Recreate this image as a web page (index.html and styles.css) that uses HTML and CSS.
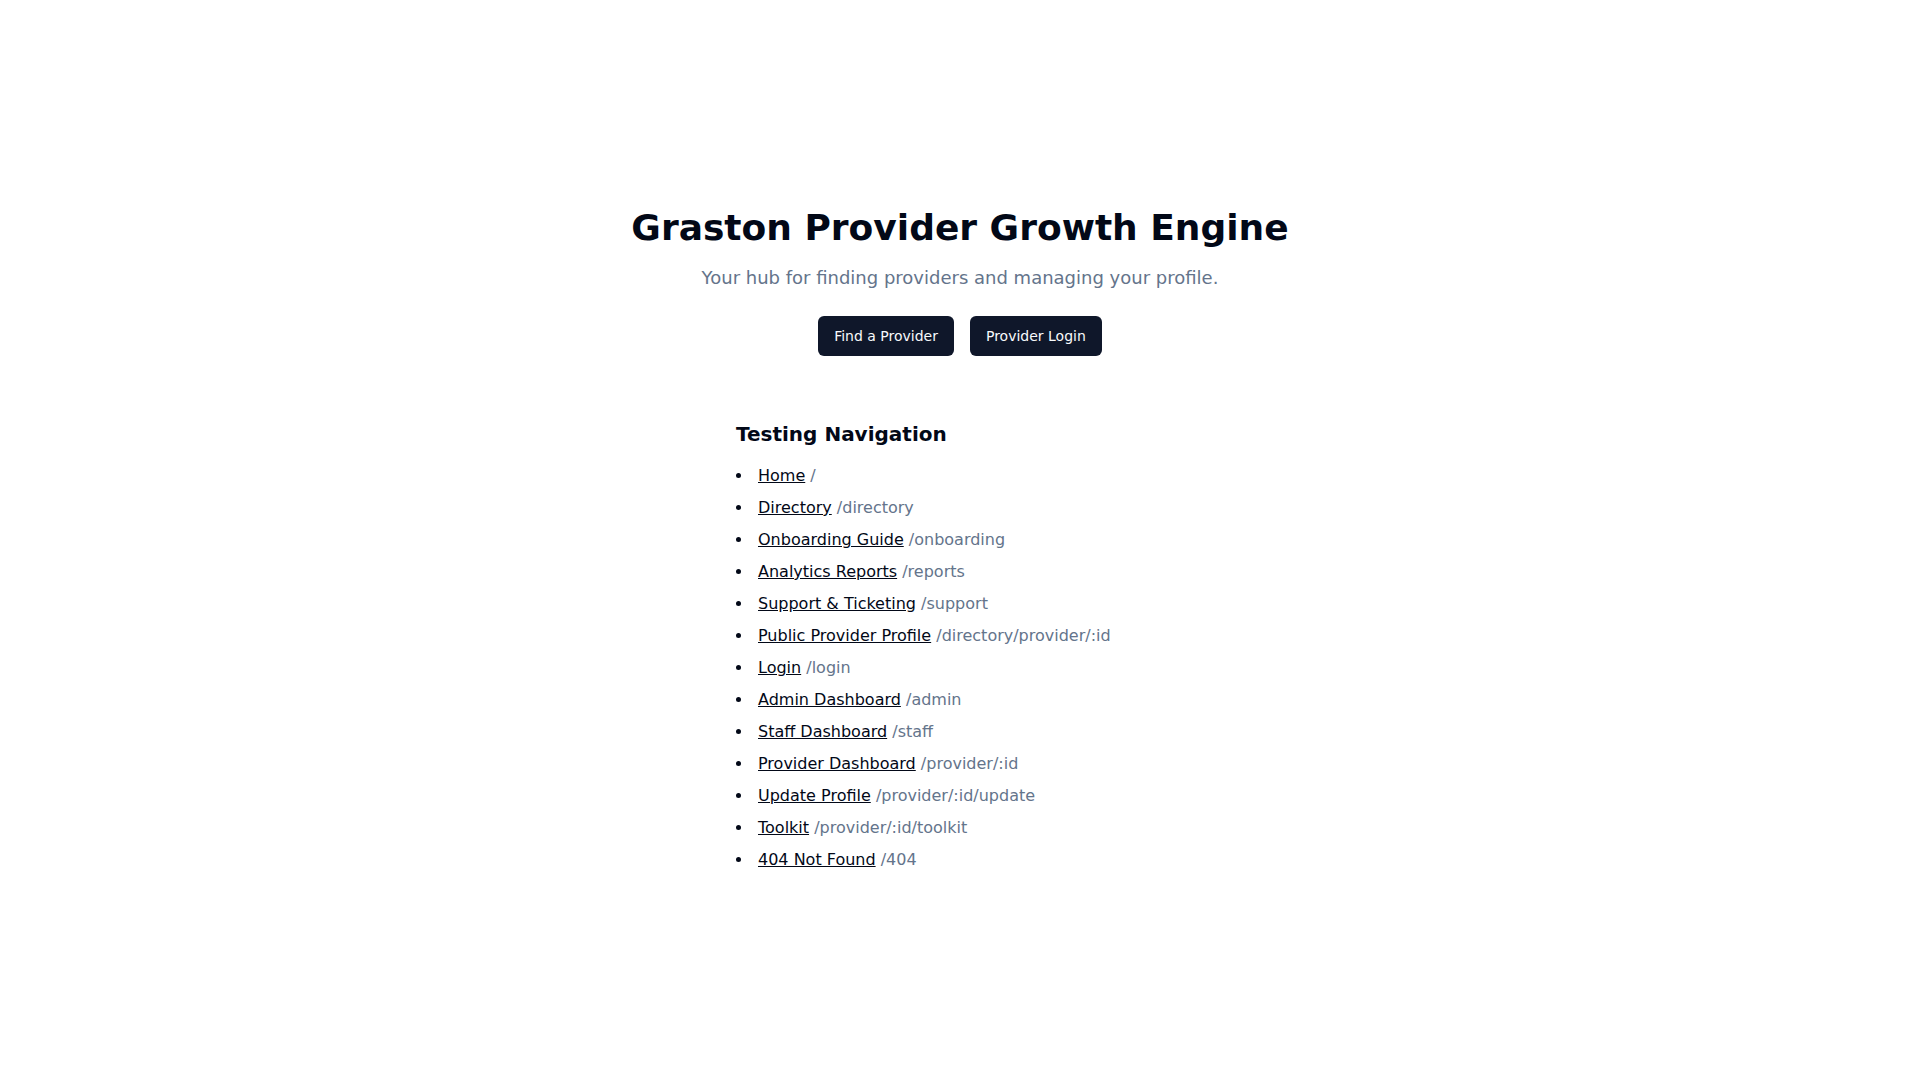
FILE: index.html
```html
<!DOCTYPE html>
<html lang="en">
<head>
    <meta charset="UTF-8">
    <meta name="viewport" content="width=device-width, initial-scale=1.0">
    <title>Graston Provider Growth Engine</title>
    <link rel="stylesheet" href="styles.css">
</head>
<body>
    <main class="page">
        <header class="hero">
            <h1>Graston Provider Growth Engine</h1>
            <p>Your hub for finding providers and managing your profile.</p>
            <div class="actions">
                <button type="button" class="btn" onclick="location.href='/directory'">Find a Provider</button>
                <button type="button" class="btn" onclick="location.href='/login'">Provider Login</button>
            </div>
        </header>

        <nav class="testing-nav">
            <h2>Testing Navigation</h2>
            <ul>
                <li><a href="/">Home</a> <span>/</span></li>
                <li><a href="/directory">Directory</a> <span>/directory</span></li>
                <li><a href="/onboarding">Onboarding Guide</a> <span>/onboarding</span></li>
                <li><a href="/reports">Analytics Reports</a> <span>/reports</span></li>
                <li><a href="/support">Support &amp; Ticketing</a> <span>/support</span></li>
                <li><a href="/directory/provider/1">Public Provider Profile</a> <span>/directory/provider/:id</span></li>
                <li><a href="/login">Login</a> <span>/login</span></li>
                <li><a href="/admin">Admin Dashboard</a> <span>/admin</span></li>
                <li><a href="/staff">Staff Dashboard</a> <span>/staff</span></li>
                <li><a href="/provider/1">Provider Dashboard</a> <span>/provider/:id</span></li>
                <li><a href="/provider/1/update">Update Profile</a> <span>/provider/:id/update</span></li>
                <li><a href="/provider/1/toolkit">Toolkit</a> <span>/provider/:id/toolkit</span></li>
                <li><a href="/404">404 Not Found</a> <span>/404</span></li>
            </ul>
        </nav>
    </main>
</body>
</html>
```
FILE: styles.css
```css
* {
    box-sizing: border-box;
}
body {
    margin: 0;
    font-family: "DejaVu Sans", sans-serif;
    font-size: 16px;
    line-height: 24px;
    color: #020817;
    background: #fff;
}
h1, h2, p, ul {
    margin: 0;
}
.page {
    min-height: 100vh;
    padding: 16px;
    display: flex;
    flex-direction: column;
    align-items: center;
    justify-content: center;
}
.hero {
    text-align: center;
}
h1 {
    font-size: 36px;
    line-height: 40px;
    font-weight: bold;
    margin-bottom: 16px;
}
.hero p {
    font-size: 18px;
    line-height: 28px;
    color: #64748b;
    margin-bottom: 24px;
}
.actions {
    display: flex;
    justify-content: center;
    gap: 16px;
}
.btn {
    padding: 10px 16px;
    border: none;
    border-radius: 6px;
    background: #0f172a;
    color: #f8fafc;
    font-family: inherit;
    font-size: 14px;
    line-height: 20px;
    cursor: pointer;
}
.btn:hover {
    background: #272e3f;
}
.testing-nav {
    width: 100%;
    max-width: 448px;
    margin-top: 64px;
}
h2 {
    font-size: 20px;
    line-height: 28px;
    font-weight: bold;
    margin-bottom: 16px;
}
ul {
    padding: 0;
    list-style: disc inside;
}
li + li {
    margin-top: 8px;
}
li a {
    color: #020817;
    text-decoration: underline;
}
li span {
    color: #64748b;
}
```
